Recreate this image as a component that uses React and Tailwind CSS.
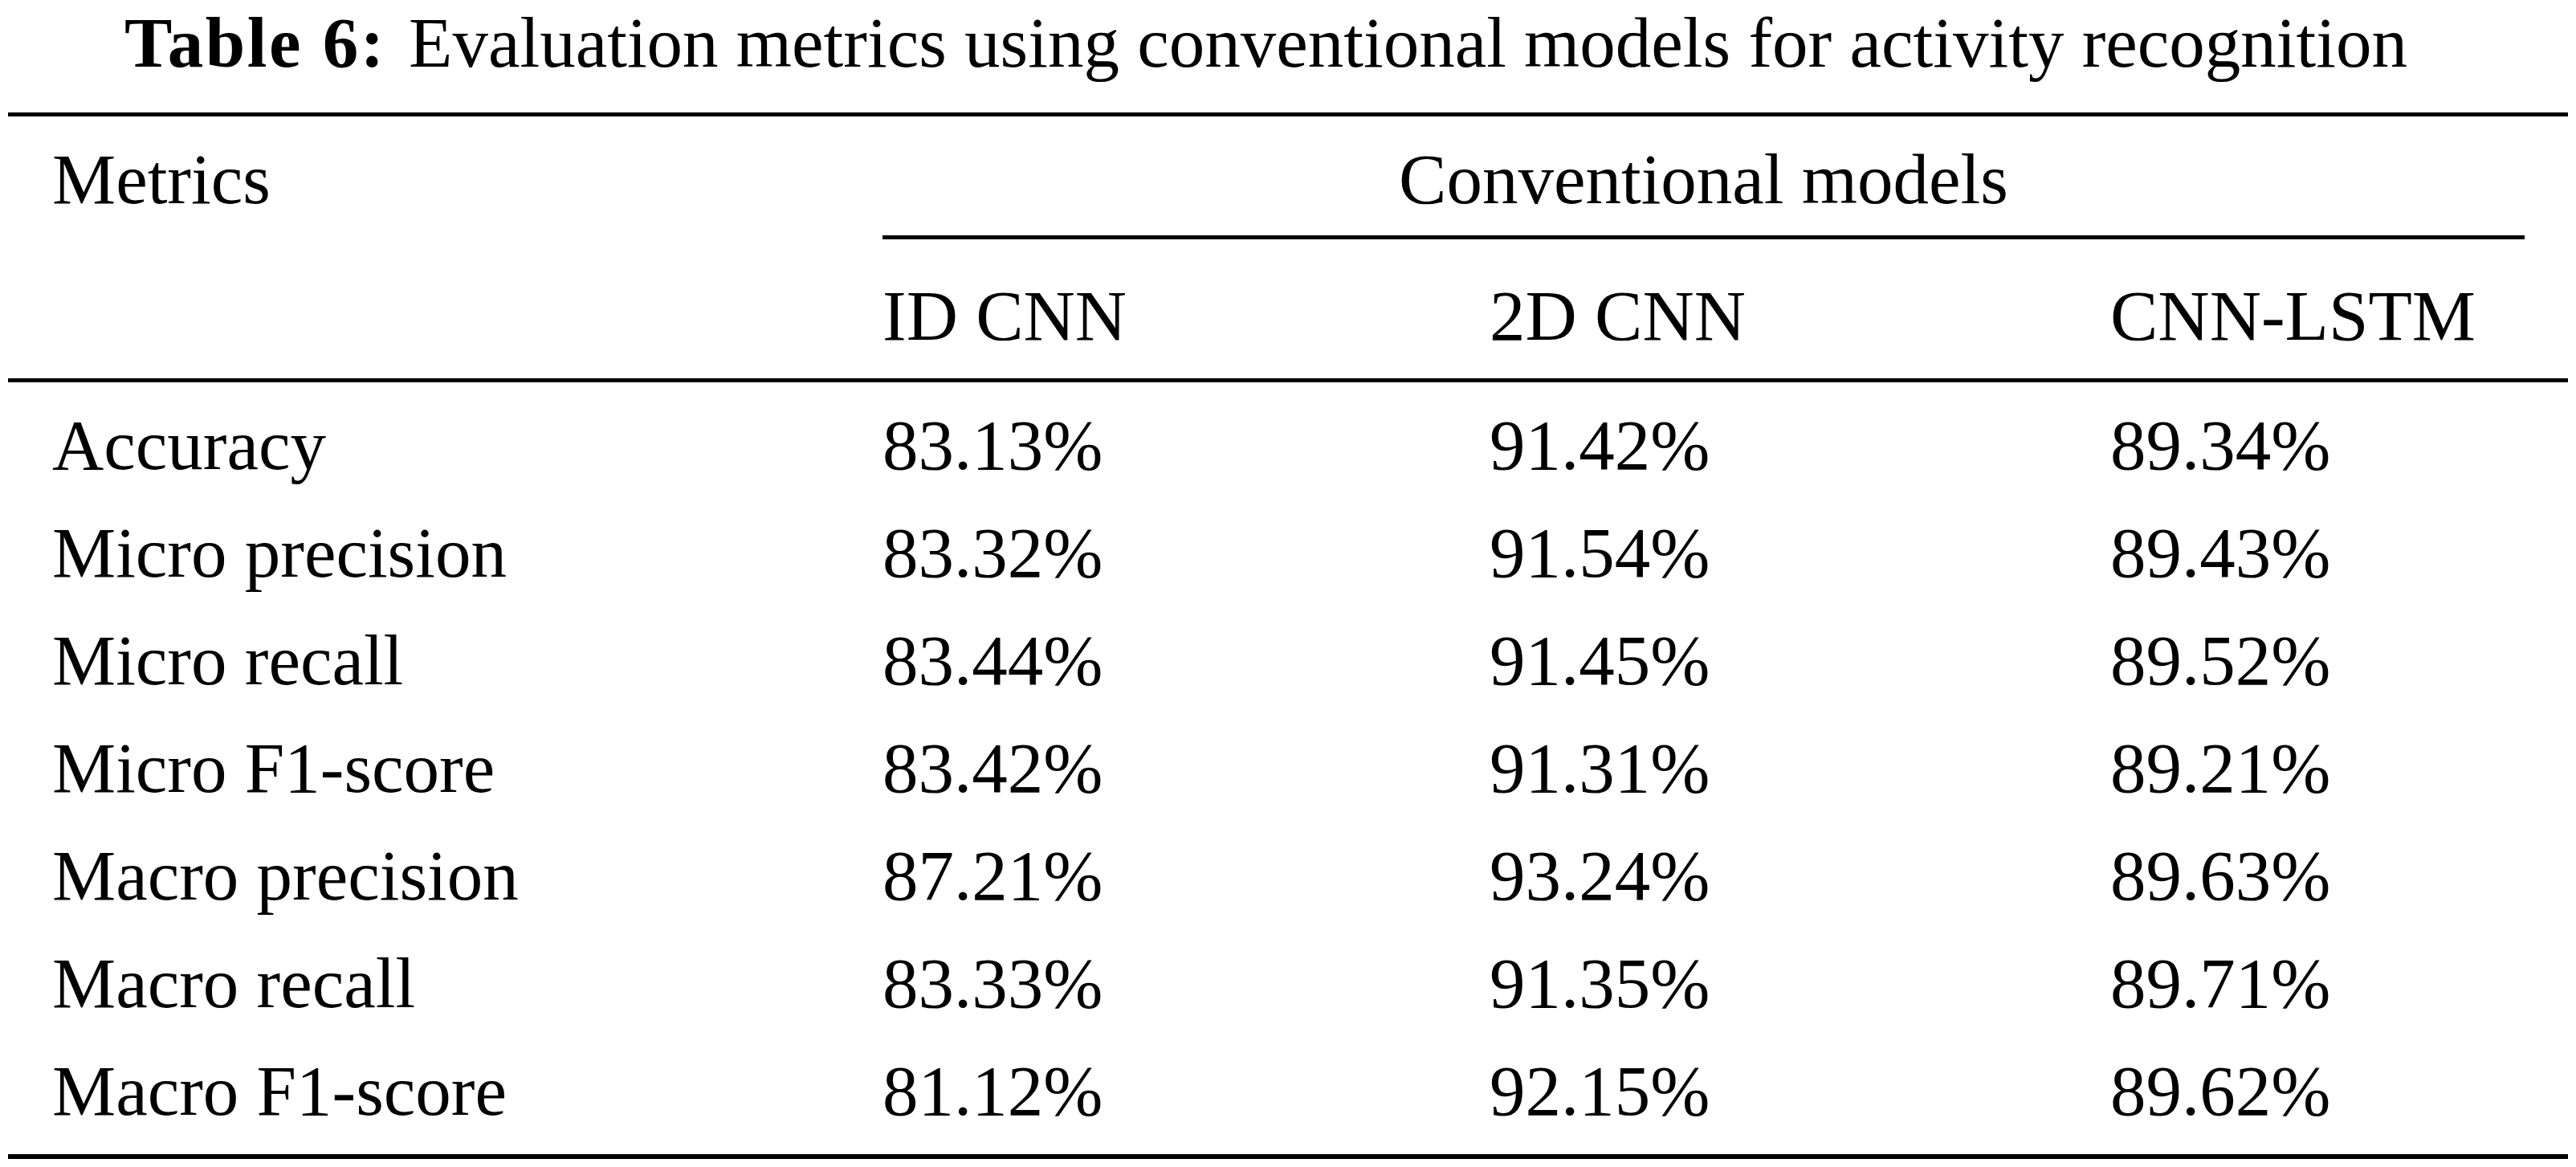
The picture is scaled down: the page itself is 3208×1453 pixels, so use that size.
import React from "react";

const rows = [
  ["Accuracy", "83.13%", "91.42%", "89.34%"],
  ["Micro precision", "83.32%", "91.54%", "89.43%"],
  ["Micro recall", "83.44%", "91.45%", "89.52%"],
  ["Micro F1-score", "83.42%", "91.31%", "89.21%"],
  ["Macro precision", "87.21%", "93.24%", "89.63%"],
  ["Macro recall", "83.33%", "91.35%", "89.71%"],
  ["Macro F1-score", "81.12%", "92.15%", "89.62%"],
];

export default function App() {
  return (
    <div className="w-[3208px] h-[1453px] bg-white text-black font-['Liberation_Serif','Times_New_Roman',serif] text-[89px] overflow-hidden">
      <div className="h-[106px] leading-[106px] pl-[155px] whitespace-nowrap">
        <span className="font-bold tracking-[2.5px]">Table 6:</span>
        <span className="ml-[6px]"> Evaluation metrics using conventional models for activity recognition</span>
      </div>
      <div className="ml-[10px] w-[3188px] mt-[34px]">
        <div className="h-[5px] bg-black" />
        <div className="grid grid-cols-[1089px_756px_773px_570px] leading-[134px] whitespace-nowrap">
          <div className="pl-[55px] pt-[11px] pb-[3px]">Metrics</div>
          <div className="col-span-3 pr-[54px] pt-[11px] pb-[3px] text-center">Conventional models</div>
          <div />
          <div className="col-span-3 mr-[54px] h-[5px] bg-black" />
          <div className="pt-[28px] pb-[11px]" />
          <div className="pt-[28px] pb-[11px]">ID CNN</div>
          <div className="pt-[28px] pb-[11px]">2D CNN</div>
          <div className="pt-[28px] pb-[11px]">CNN-LSTM</div>
        </div>
        <div className="h-[5px] bg-black" />
        <div className="pt-[11px] pb-[12px] leading-[134px] whitespace-nowrap">
          {rows.map((r) => (
            <div key={r[0]} className="grid grid-cols-[1089px_756px_773px_570px]">
              <div className="pl-[55px]">{r[0]}</div>
              <div>{r[1]}</div>
              <div>{r[2]}</div>
              <div>{r[3]}</div>
            </div>
          ))}
        </div>
        <div className="h-[6px] bg-black" />
      </div>
    </div>
  );
}
